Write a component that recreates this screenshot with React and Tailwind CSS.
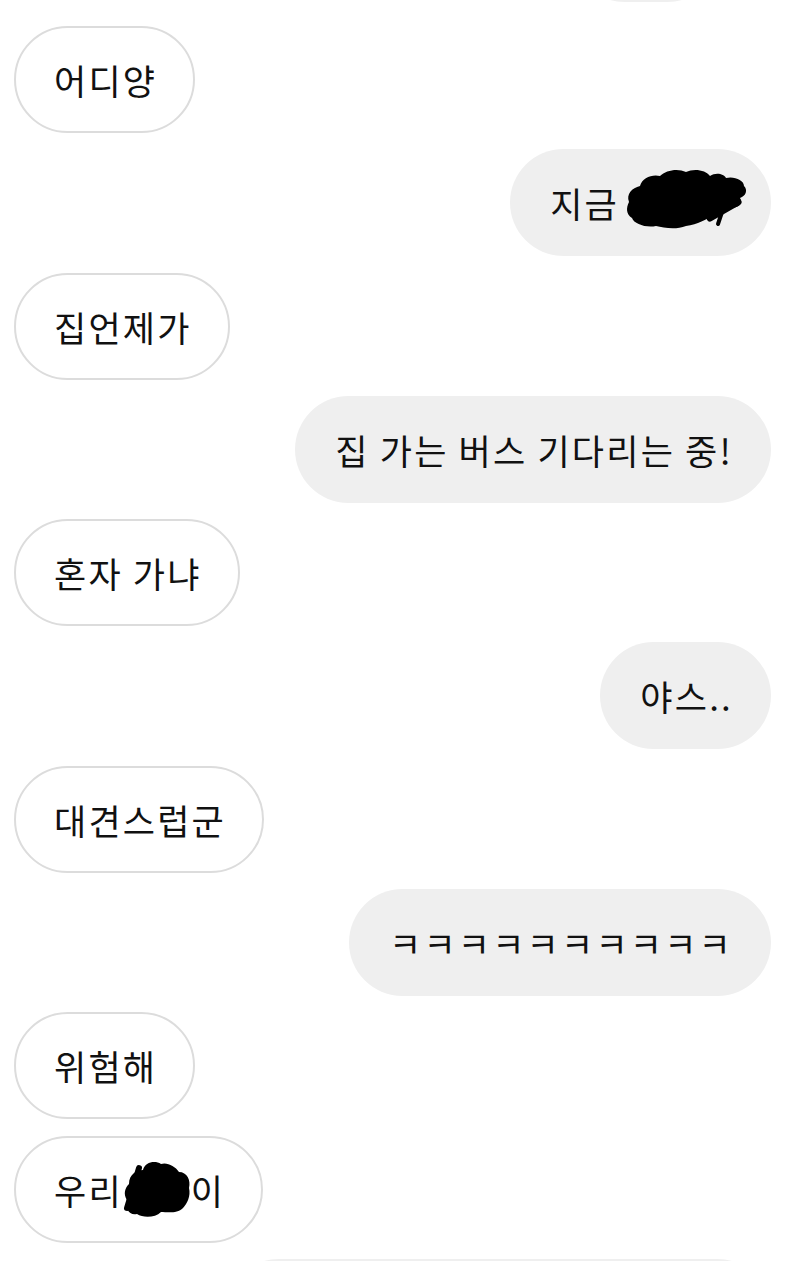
import React from 'react';

const FONT = { fontFamily: '"Noto Sans CJK KR", "Noto Sans", sans-serif' };

// redaction scribbles drawn over the hidden words
function BlobWide() {
  return (
    <svg width="122" height="62" viewBox="0 0 122 62" className="inline-block align-middle -mt-[8px] -ml-[3px]">
      <path
        d="M3 34 C0 26 6 20 14 18 C16 10 26 6 34 8 C40 2 52 0 60 4 C68 0 80 2 84 8 C90 4 98 6 100 10 C108 8 118 12 118 18 C122 22 120 28 114 30 C118 36 112 40 104 40 C100 44 94 46 88 46 C80 52 72 56 60 58 C50 62 38 60 30 58 C20 60 8 56 6 50 C0 46 0 40 3 34 Z"
        fill="#000"
      />
      <path d="M84 50 L112 34" stroke="#000" strokeWidth="7" strokeLinecap="round" />
      <path d="M96 44 L92 56" stroke="#000" strokeWidth="4" strokeLinecap="round" />
    </svg>
  );
}

function BlobSmall() {
  return (
    <svg width="68" height="58" viewBox="0 0 68 58" className="inline-block align-middle">
      <path
        d="M6 24 C6 14 14 10 20 10 C22 2 32 0 38 4 C44 2 52 6 56 12 C64 12 68 20 66 28 C68 36 64 44 60 48 C54 54 44 52 38 52 C32 58 20 58 14 54 C6 56 2 48 4 40 C0 34 2 28 6 24 Z"
        fill="#000"
      />
      <path d="M4 48 L16 8" stroke="#000" strokeWidth="6" strokeLinecap="round" />
    </svg>
  );
}

function Left({ children }) {
  return (
    <div className="flex justify-start">
      <div className="h-[107px] flex items-center rounded-full border-2 border-[#dcdcdc] bg-white pl-[38px] pr-[36px] text-[35px] tracking-[2.2px] leading-none text-[#111] whitespace-nowrap">
        {children}
      </div>
    </div>
  );
}

function Right({ children, className = '' }) {
  return (
    <div className="flex justify-end">
      <div className={`h-[107px] flex items-center rounded-full bg-[#efefef] pl-10 text-[35px] tracking-[2.2px] leading-none text-[#111] whitespace-nowrap ${className || 'pr-[38px]'}`}>
        {children}
      </div>
    </div>
  );
}

export default function App() {
  return (
    <div className="w-[800px] h-[1261px] overflow-hidden bg-white" style={FONT}>
      <div className="flex flex-col pl-[14px] pr-[29px]">
        {/* tail of the previous bubble */}
        <div className="flex justify-end pr-[50px] -mt-[105px] mb-[24px]">
          <div className="h-[107px] w-[150px] rounded-full bg-[#efefef]" />
        </div>

        <div className="flex flex-col gap-[16.3px]">
          <Left>어디양</Left>
          <Right className="pr-[23px]">
            지금&nbsp;<BlobWide />
          </Right>
          <Left>집언제가</Left>
          <Right>집 가는 버스 기다리는 중!</Right>
          <Left>혼자 가냐</Left>
          <Right>야스..</Right>
          <Left>대견스럽군</Left>
          <Right>ㅋㅋㅋㅋㅋㅋㅋㅋㅋㅋ</Right>
          <Left>위험해</Left>
          <Left>
            우리<BlobSmall />이
          </Left>
          <div className="flex justify-end">
            <div className="h-[107px] w-[546px] rounded-full bg-[#efefef]" />
          </div>
        </div>
      </div>
    </div>
  );
}
